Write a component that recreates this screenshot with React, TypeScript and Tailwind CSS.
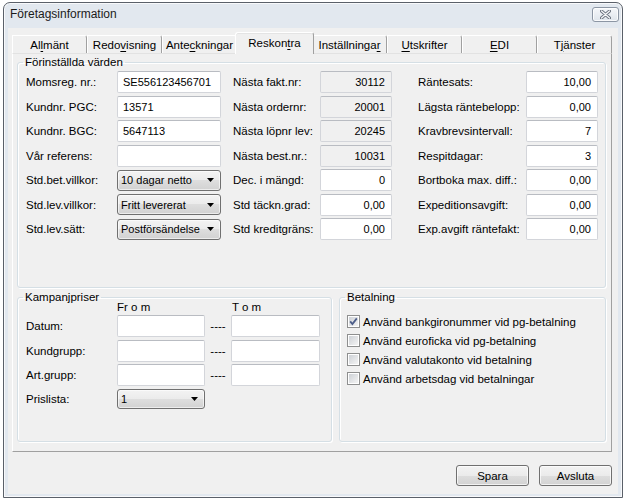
import React from "react";

type Row = {
  l1: string;
  v1: string;
  combo?: boolean;
  l2: string;
  v2: string;
  ro?: boolean;
  l3: string;
  v3: string;
};

const rows: Row[] = [
  { l1: "Momsreg. nr.:", v1: "SE556123456701", l2: "Nästa fakt.nr:", v2: "30112", ro: true, l3: "Räntesats:", v3: "10,00" },
  { l1: "Kundnr. PGC:", v1: "13571", l2: "Nästa ordernr:", v2: "20001", ro: true, l3: "Lägsta räntebelopp:", v3: "0,00" },
  { l1: "Kundnr. BGC:", v1: "5647113", l2: "Nästa löpnr lev:", v2: "20245", ro: true, l3: "Kravbrevsintervall:", v3: "7" },
  { l1: "Vår referens:", v1: "", l2: "Nästa best.nr.:", v2: "10031", ro: true, l3: "Respitdagar:", v3: "3" },
  { l1: "Std.bet.villkor:", v1: "10 dagar netto", combo: true, l2: "Dec. i mängd:", v2: "0", l3: "Bortboka max. diff.:", v3: "0,00" },
  { l1: "Std.lev.villkor:", v1: "Fritt levererat", combo: true, l2: "Std täckn.grad:", v2: "0,00", l3: "Expeditionsavgift:", v3: "0,00" },
  { l1: "Std.lev.sätt:", v1: "Postförsändelse", combo: true, l2: "Std kreditgräns:", v2: "0,00", l3: "Exp.avgift räntefakt:", v3: "0,00" },
];

const tabs = [
  { text: "Allmänt", u: 2 },
  { text: "Redovisning", u: 4 },
  { text: "Anteckningar", u: 4 },
  { text: "Reskontra", u: 6 },
  { text: "Inställningar", u: 12 },
  { text: "Utskrifter", u: 0 },
  { text: "EDI", u: 0 },
  { text: "Tjänster", u: 1 },
];

const checks = [
  { text: "Använd bankgironummer vid pg-betalning", on: true },
  { text: "Använd euroficka vid pg-betalning", on: false },
  { text: "Använd valutakonto vid betalning", on: false },
  { text: "Använd arbetsdag vid betalningar", on: false },
];

function Field({ value, w, right, ro }: { value: string; w: string; right?: boolean; ro?: boolean }) {
  return (
    <div
      className={`${w} h-[22px] shrink-0 flex items-center rounded-[2px] border border-[#d3d5da] border-t-[#b9bcc2] text-[11px] ${
        ro ? "bg-[#f0f0f0]" : "bg-white"
      } ${right ? "justify-end pr-[6px]" : "pl-[5px]"}`}
    >
      {value}
    </div>
  );
}

function Combo({ value, w, h = "h-[21px]" }: { value: string; w: string; h?: string }) {
  return (
    <div
      className={`${w} ${h} shrink-0 flex items-center justify-between pl-[3px] pr-[6px] rounded-[3px] border border-[#707070] text-[11px] bg-[linear-gradient(#f3f3f3,#ebebeb_50%,#dedede_50%,#d2d2d2)] shadow-[inset_0_0_0_1px_rgba(255,255,255,0.6)]`}
    >
      <span>{value}</span>
      <svg width="7" height="4" viewBox="0 0 7 4" className="shrink-0">
        <path d="M0 0h7L3.5 4z" fill="#000" />
      </svg>
    </div>
  );
}

function Button({ label }: { label: string }) {
  return (
    <div className="w-[73px] h-[21px] flex items-center justify-center rounded-[3px] border border-[#707070] bg-[linear-gradient(#f3f3f3,#ebebeb_50%,#dedede_50%,#d2d2d2)] shadow-[inset_0_0_0_1px_rgba(255,255,255,0.7)]">
      {label}
    </div>
  );
}

function Check({ on }: { on: boolean }) {
  return (
    <div className="w-[13px] h-[13px] shrink-0 border border-[#8e8f8f] bg-white p-[1px]">
      <div className="w-full h-full bg-[linear-gradient(135deg,#cdd1d6,#f4f4f4)] relative">
        {on && (
          <svg width="11" height="11" viewBox="0 0 11 11" className="absolute -left-[1px] -top-[1px]">
            <path d="M2.2 5.4 4.4 8 8.8 2.4" fill="none" stroke="#4d5e8a" strokeWidth="1.8" />
          </svg>
        )}
      </div>
    </div>
  );
}

function Group({ title, className, children }: { title: string; className: string; children: React.ReactNode }) {
  return (
    <fieldset
      className={`${className} rounded-[3px] border border-[#d5dfe5] shadow-[inset_1px_1px_0_#fff,1px_1px_0_#fff]`}
    >
      <legend className="ml-[5px] px-[2px] leading-[14px]">{title}</legend>
      {children}
    </fieldset>
  );
}

export default function App() {
  return (
    <div className="w-[626px] h-[498px] bg-white overflow-hidden font-['Liberation_Sans',Arial,sans-serif] text-[11.5px] leading-[14px] text-black">
      <div className="ml-[3px] mt-[2px] w-[620px] h-[496px] flex flex-col rounded-t-[7px] border border-[#5a6069] bg-[#e2e8ef] shadow-[inset_0_0_0_1px_rgba(255,255,255,0.75)]">
        {/* title bar */}
        <div className="h-[25px] shrink-0 flex items-start justify-between pl-[6px] pr-[3px]">
          <span className="mt-[4px] text-[12px] text-[#1b1b1b]">Företagsinformation</span>
          <div className="mt-[4px] w-[27px] h-[15px] flex items-center justify-center rounded-[3px] border border-[#8c96a4] bg-[linear-gradient(#f5f7fa,#dfe5ec)] shadow-[inset_0_0_0_1px_rgba(255,255,255,0.8)]">
            <svg width="11" height="9" viewBox="0 0 11 9">
              <path d="M1.5 1 9.5 8M9.5 1 1.5 8" stroke="#6c7480" strokeWidth="3.2" strokeLinecap="round" />
              <path d="M1.5 1 9.5 8M9.5 1 1.5 8" stroke="#f6f7f9" strokeWidth="1.3" strokeLinecap="round" />
            </svg>
          </div>
        </div>

        {/* client area */}
        <div className="mx-[4px] mb-[3px] flex-1 bg-[#f0f0f0] pl-[4px] pt-[4px] pr-[6px] flex flex-col">
          {/* tabs */}
          <div className="h-[21px] flex items-end">
            {tabs.map((t, i) => {
              const sel = t.text === "Reskontra";
              const txt = (
                <span>
                  {t.text.slice(0, t.u)}
                  <span className="underline underline-offset-[2px]">{t.text[t.u]}</span>
                  {t.text.slice(t.u + 1)}
                </span>
              );
              return sel ? (
                <div
                  key={i}
                  className="relative z-10 -mx-[2px] -mb-[1px] w-[79px] h-[22px] shrink-0 flex items-center justify-center pb-[1px] rounded-t-[3px] border-l border-t border-r border-l-white border-t-white border-r-[#a0a0a0] bg-[#f0f0f0] shadow-[inset_0_1px_0_#e4e4e4]"
                >
                  {txt}
                </div>
              ) : (
                <div
                  key={i}
                  className="w-[75px] h-[18px] shrink-0 flex items-center justify-center rounded-tr-[3px] border-l border-t border-r border-l-white border-t-white border-r-[#a0a0a0] bg-[#f0f0f0]"
                >
                  {txt}
                </div>
              );
            })}
          </div>

          {/* tab page */}
          <div className="w-[600px] h-[399px] border border-l-white border-t-[#e2e2e2] border-r-[#a0a0a0] border-b-[#a0a0a0] bg-[#f0f0f0] pl-[4px] pt-[1px]">
            <Group title="Förinställda värden" className="w-[589px] h-[233px]">
              <div className="mt-[2px] pl-[8px] flex flex-col gap-[2.5px]">
                {rows.map((r, i) => (
                  <div key={i} className="h-[22px] flex items-center">
                    <div className="w-[91px] shrink-0">{r.l1}</div>
                    {r.combo ? <Combo value={r.v1} w="w-[104px]" /> : <Field value={r.v1} w="w-[104px]" />}
                    <div className="ml-[12px] w-[87px] shrink-0">{r.l2}</div>
                    <Field value={r.v2} w="w-[72px]" right ro={r.ro} />
                    <div className="ml-[26px] w-[108px] shrink-0">{r.l3}</div>
                    <Field value={r.v3} w="w-[72px]" right />
                  </div>
                ))}
              </div>
            </Group>

            <div className="mt-[2px] flex gap-[7px]">
              <Group title="Kampanjpriser" className="w-[315px] h-[152px]">
                <div className="pl-[8px]">
                  <div className="-mt-[4px] flex">
                    <div className="ml-[91px] w-[114px]">Fr o m</div>
                    <div className="ml-[1px]">T o m</div>
                  </div>
                  <div className="mt-[1px] flex flex-col gap-[2.5px]">
                    {["Datum:", "Kundgrupp:", "Art.grupp:"].map((l) => (
                      <div key={l} className="h-[22px] flex items-center">
                        <div className="w-[91px] shrink-0">{l}</div>
                        <Field value="" w="w-[88px]" />
                        <div className="w-[26px] shrink-0 text-center">----</div>
                        <Field value="" w="w-[89px]" />
                      </div>
                    ))}
                    <div className="h-[21px] flex items-center">
                      <div className="w-[91px] shrink-0">Prislista:</div>
                      <Combo value="1" w="w-[88px]" h="h-[20px]" />
                    </div>
                  </div>
                </div>
              </Group>

              <Group title="Betalning" className="w-[267px] h-[152px]">
                <div className="mt-[8px] pl-[7px] flex flex-col">
                  {checks.map((c) => (
                    <div key={c.text} className="h-[19px] flex items-center gap-[3px]">
                      <Check on={c.on} />
                      <span>{c.text}</span>
                    </div>
                  ))}
                </div>
              </Group>
            </div>
          </div>

          {/* buttons */}
          <div className="mt-[13px] flex justify-end gap-[10px]">
            <Button label="Spara" />
            <Button label="Avsluta" />
          </div>
        </div>
      </div>
    </div>
  );
}
